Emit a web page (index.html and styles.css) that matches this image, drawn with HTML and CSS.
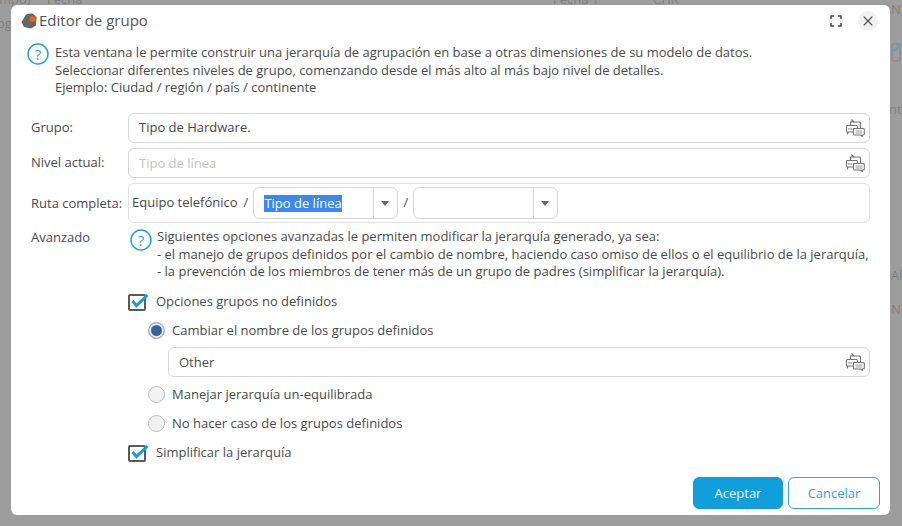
FILE: index.html
```html
<!DOCTYPE html>
<html lang="es">
<head>
<meta charset="utf-8">
<title>Editor de grupo</title>
<link rel="stylesheet" href="styles.css">
</head>
<body>
<svg width="0" height="0" class="defs">
  <symbol id="tr" viewBox="0 0 20 18">
    <g fill="#fff" stroke="#757575" stroke-width="1.1">
      <path d="M5.500 3h9a1 1 0 0 1 1 1v7h-10z"/>
      <path d="M7 3V1l2 2"/>
      <path d="M1.500 6.500h10a1 1 0 0 1 1 1v4.500a1 1 0 0 1-1 1h-8l-1 1.500v-1.500a1 1 0 0 1-1-1v-4.500a1 1 0 0 1 1-1z"/>
      <path d="M9.500 9.500h9a1 1 0 0 1 .8 1v4.500a1 1 0 0 1-1 1h-1v1.500l-1.500-1.500h-6.300a1 1 0 0 1-1-1v-4.500a1 1 0 0 1 1-1z"/>
    </g>
    <path d="M3.500 10h1M5.700 10h1M7.900 10h1" stroke="#555" stroke-width="1.300"/>
    <path d="M10.500 12h7M10.500 14h7" stroke="#999" stroke-width="1"/>
  </symbol>
  <symbol id="help" viewBox="0 0 22 22">
    <circle cx="11" cy="11" r="10" fill="none" stroke="#1ea3dc" stroke-width="1.500"/>
    <text x="11" y="16.500" text-anchor="middle" class="help-q">?</text>
  </symbol>
  <symbol id="check" viewBox="0 0 21 18">
    <rect x="1" y="2" width="16" height="15" rx="1" fill="#fff" stroke="#5a5a5a" stroke-width="2"/>
    <path d="M4.500 8l4 4.500L19.500 2" fill="none" stroke="#119fdb" stroke-width="3"/>
  </symbol>
</svg>

<div class="backdrop">
  <span class="bg-t b1">mpo)</span><span class="bg-t b2">Fecha</span><span class="bg-t b3">Fecha 1</span><span class="bg-t b4">CHR</span>
  <span class="bg-t b5">og</span><span class="bg-t b6">Ni</span><span class="bg-t b7">nti</span><span class="bg-t b8">Al</span><span class="bg-t b9">Ni</span>
  <svg class="bg-ico" width="11" height="20" viewBox="0 0 11 20"><rect x="1" y="2" width="8" height="17" rx="1" fill="none" stroke="#8a8a8a" stroke-width="1.500"/><path d="M3 9l7-7" stroke="#6e9db3" stroke-width="3"/></svg>
</div>

<main class="dialog">
  <header class="head">
    <svg class="logo" width="17" height="16" viewBox="0 0 17 16">
      <path d="M5 1.500Q8 0 12 .8L15.500 4l-.5 8.500-5 3-7-1.500L.5 9z" fill="#666"/>
      <circle cx="11.500" cy="6" r="3" fill="#e8641f"/>
    </svg>
    <h1 class="title">Editor de grupo</h1>
    <svg class="expand" width="12" height="12" viewBox="0 0 12 12">
      <path d="M1 4V1h3M8 1h3v3M11 8v3H8M4 11H1V8" fill="none" stroke="#444" stroke-width="1.500"/>
    </svg>
    <button class="close" aria-label="Cerrar">
      <svg width="10" height="10" viewBox="0 0 10 10"><path d="M.7.700l8.600 8.600M9.300.700L.7 9.300" stroke="#444" stroke-width="1.200"/></svg>
    </button>
  </header>

  <section class="intro">
    <svg class="help-icon"><use href="#help"/></svg>
    <p>Esta ventana le permite construir una jerarquía de agrupación en base a otras dimensiones de su modelo de datos.<br>Seleccionar diferentes niveles de grupo, comenzando desde el más alto al más bajo nivel de detalles.<br>Ejemplo: Ciudad / región / país / continente</p>
  </section>

  <div class="form">
    <div class="row">
      <label class="lab">Grupo:</label>
      <div class="input"><span>Tipo de Hardware.</span><svg class="tr"><use href="#tr"/></svg></div>
    </div>
    <div class="row">
      <label class="lab">Nivel actual:</label>
      <div class="input"><span class="ph">Tipo de línea</span><svg class="tr"><use href="#tr"/></svg></div>
    </div>
    <div class="row">
      <label class="lab lab-path">Ruta completa:</label>
      <div class="path">
        <span class="crumb">Equipo telefónico</span><span class="sep">/</span>
        <div class="combo"><span class="val"><span class="sel">Tipo de línea</span></span><span class="arrow"></span></div>
        <span class="sep sep2">/</span>
        <div class="combo"><span class="val"></span><span class="arrow"></span></div>
      </div>
    </div>
    <div class="row adv">
      <div class="lab lab-adv">Avanzado</div>
      <div class="adv-body">
        <div class="adv-intro">
          <svg class="help-icon"><use href="#help"/></svg>
          <p>Siguientes opciones avanzadas le permiten modificar la jerarquía generado, ya sea:<br>- el manejo de grupos definidos por el cambio de nombre, haciendo caso omiso de ellos o el equilibrio de la jerarquía,<br>- la prevención de los miembros de tener más de un grupo de padres (simplificar la jerarquía).</p>
        </div>
        <div class="check"><svg class="chk"><use href="#check"/></svg><span>Opciones grupos no definidos</span></div>
        <div class="radios">
          <div class="radio"><span class="dot on"></span><span>Cambiar el nombre de los grupos definidos</span></div>
          <div class="input other"><span>Other</span><svg class="tr"><use href="#tr"/></svg></div>
          <div class="radio r2"><span class="dot"></span><span>Manejar jerarquía un-equilibrada</span></div>
          <div class="radio r3"><span class="dot"></span><span>No hacer caso de los grupos definidos</span></div>
        </div>
        <div class="check c2"><svg class="chk"><use href="#check"/></svg><span>Simplificar la jerarquía</span></div>
      </div>
    </div>
  </div>

  <footer class="foot">
    <button class="btn primary">Aceptar</button>
    <button class="btn ghost">Cancelar</button>
  </footer>
</main>
</body>
</html>
```
FILE: styles.css
```css
* { box-sizing: border-box; }
html, body { margin: 0; height: 100%; }
body {
  width: 902px;
  height: 526px;
  overflow: hidden;
  position: relative;
  background: #9d9d9d;
  font: 13px/17.5px "Open Sans", "DejaVu Sans", sans-serif;
  color: #4a4a4a;
}
.defs { position: absolute; }
.backdrop { position: absolute; inset: 0; color: #7f7f7f; }
.bg-t { position: absolute; white-space: nowrap; }
.b1 { left: -1px; top: -9px; }
.b2 { left: 47px; top: -9px; }
.b3 { left: 553px; top: -9px; }
.b4 { left: 653px; top: -9px; }
.b5 { left: -3px; top: 15px; }
.b6 { left: 891px; top: 1px; }
.b7 { left: 889px; top: 101px; }
.b8 { left: 891px; top: 267px; }
.b9 { left: 891px; top: 301px; }
.bg-ico { position: absolute; left: 891px; top: 42px; }

.dialog {
  position: absolute;
  left: 11px;
  top: 5px;
  width: 879px;
  height: 510px;
  background: #fff;
  border-radius: 6px;
  display: flex;
  flex-direction: column;
}
.head { display: flex; align-items: center; height: 31px; padding: 0 12px 0 10px; }
.logo { margin-right: 1px; flex: none; }
.title { margin: 0; font-size: 15px; font-weight: 400; color: #555; flex: 1; }
.expand { margin-right: 16px; }
.close {
  width: 20px; height: 20px; padding: 0; border: 0; border-radius: 50%;
  background: #f1f1f1; display: flex; align-items: center; justify-content: center;
}
.intro { display: flex; align-items: flex-start; padding: 8px 0 0 16px; height: 77px; }
.intro p { margin: 0 0 0 6px; }
.help-icon { width: 22px; height: 22px; flex: none; margin-top: -1px; }
.help-q { font: 15px "Open Sans", sans-serif; fill: #1ea3dc; }

.form { padding: 0 20px; display: flex; flex-direction: column; gap: 5px; }
.row { display: flex; align-items: center; }
.lab { width: 97px; flex: none; }
.input {
  flex: 1;
  height: 30px;
  border: 1px solid #d6d6d6;
  border-radius: 6px;
  padding: 0 0 0 10px;
  display: flex;
  align-items: center;
  justify-content: space-between;
}
.ph { color: #c4c4c4; padding-top: 1px; }
.tr { width: 20px; height: 18px; margin-right: 4px; flex: none; }
.lab-path { margin-top: 2px; white-space: nowrap; }
.path {
  flex: 1;
  height: 40px;
  border: 1px solid #e2e2e2;
  border-radius: 6px;
  display: flex;
  align-items: center;
  padding-left: 3px;
}
.sep { margin: 0 5px 0 6px; }
.sep2 { margin: 0 5px; }
.combo {
  width: 145px;
  height: 32px;
  border: 1px solid #d6d6d6;
  border-radius: 6px;
  display: flex;
  align-items: stretch;
}
.combo .val { flex: 1; padding-left: 10px; display: flex; align-items: center; }
.sel { background: #3b88f0; color: #fff; line-height: 17px; }
.arrow { width: 24px; border-left: 1px solid #d6d6d6; position: relative; }
.arrow::after {
  content: "";
  position: absolute;
  left: 7px;
  top: 13px;
  border: 4px solid transparent;
  border-top: 5px solid #666;
  border-bottom: 0;
}

.adv { align-items: flex-start; }
.lab-adv { padding-top: 1px; }
.adv-body { flex: 1; min-width: 0; }
.adv-intro { display: flex; padding-left: 2px; white-space: nowrap; }
.adv-intro p { margin: 0 0 0 5px; }
.adv-intro .help-icon { margin-top: 1px; }
.check { display: flex; align-items: center; height: 18px; margin-top: 12px; }
.chk { width: 21px; height: 18px; flex: none; margin-right: 7px; }
.radios { padding: 11px 0 0 20px; }
.radio { display: flex; align-items: center; height: 18px; }
.dot {
  width: 17px; height: 17px; border-radius: 50%;
  border: 1px solid #bdbdbd; background: #f2f2f2; margin-right: 7px; flex: none;
}
.dot.on {
  background: #36659b;
  border: 1px solid #b5b5b5;
  box-shadow: inset 0 0 0 2px #e9eef5;
}
.other { height: 30px; margin: 7px 0 0 20px; }
.other > span { padding-top: 2px; }
.r2 { margin-top: 9px; }
.r3 { margin-top: 11px; }
.c2 { margin-top: 11px; }

.foot {
  margin-top: auto;
  padding: 0 10px 6px 0;
  display: flex;
  justify-content: flex-end;
  gap: 5px;
}
.btn {
  height: 32px;
  border-radius: 6px;
  font: 13px "Open Sans", sans-serif;
  padding: 0;
}
.primary { width: 90px; background: #119fdb; border: 1px solid #119fdb; color: #e8f6fc; }
.ghost { width: 92px; background: #fff; border: 1px solid #2aa5dc; color: #2aa5dc; }
```
